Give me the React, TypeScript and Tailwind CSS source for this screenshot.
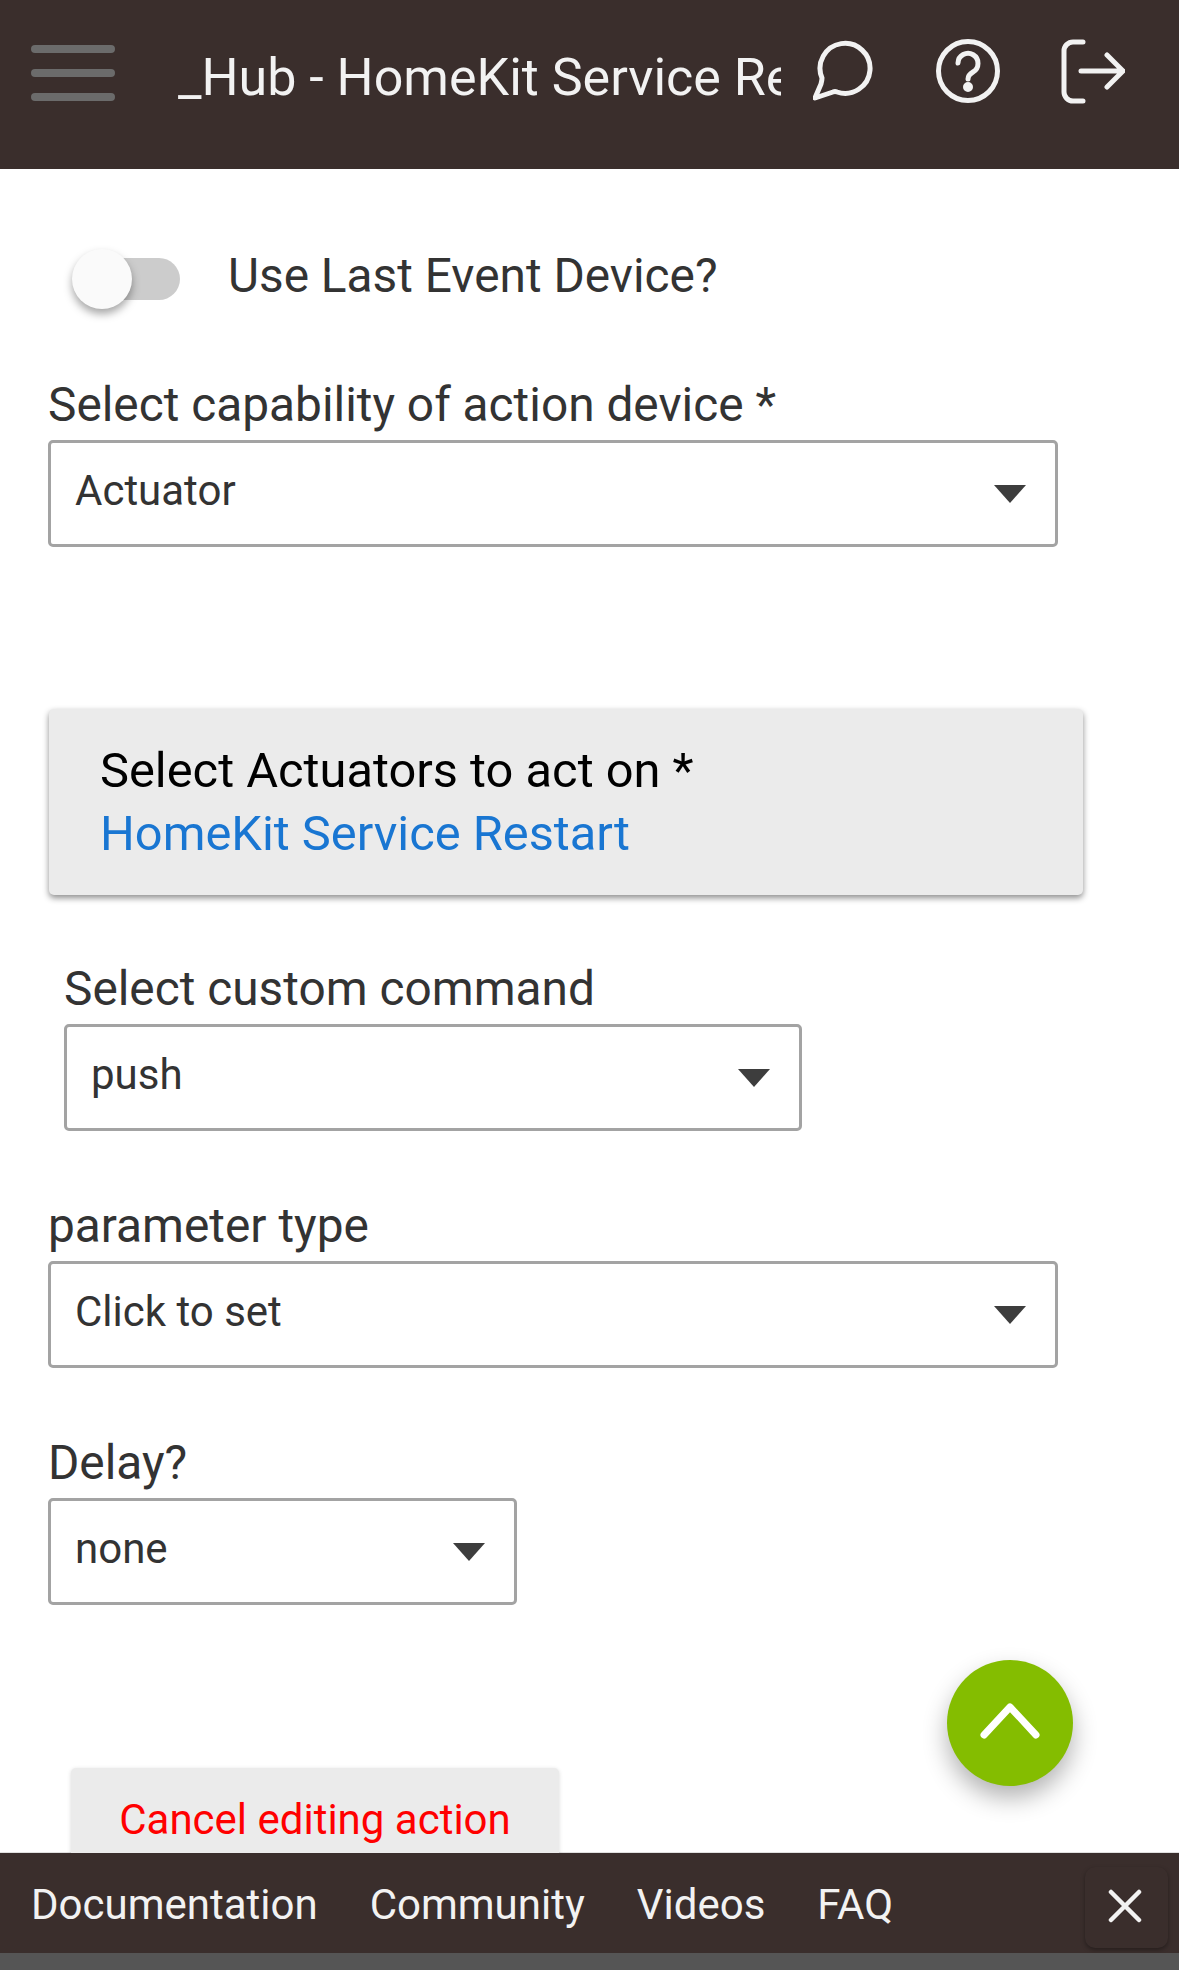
import React from 'react';

const Caret = () => (
  <svg width="34" height="20" viewBox="0 0 34 20" className="shrink-0">
    <path d="M1 1 H33 L17 19 Z" fill="#3d3d3d" />
  </svg>
);

const SelectBox = ({ value, width }: { value: string; width: string }) => (
  <div className={`${width} mt-[5px] h-[107px] box-border border-[3px] border-[#a3a3a3] rounded-[5px] bg-white flex items-center justify-between pl-[24px] pr-[28px]`}>
    <span className="text-[42px] leading-none text-[#333] -mt-[5px]">{value}</span>
    <Caret />
  </div>
);

export default function App() {
  return (
    <div className="w-[1179px] h-[1970px] flex flex-col overflow-hidden bg-white font-['Roboto',sans-serif]">
      {/* top bar */}
      <header className="h-[169px] shrink-0 bg-[#3a2e2c] flex items-start">
        <div className="ml-[31px] mt-[45px] w-[84px] flex flex-col gap-[16px]">
          <div className="h-[8px] rounded-[4px] bg-[#6b6b6b]" />
          <div className="h-[8px] rounded-[4px] bg-[#6b6b6b]" />
          <div className="h-[8px] rounded-[4px] bg-[#6b6b6b]" />
        </div>
        <div className="ml-[63px] mt-[47px] w-[603px] overflow-hidden whitespace-nowrap text-[52px] leading-[62px] text-[#f2f2f2]">
          _Hub - HomeKit Service Restart
        </div>
        <svg width="60" height="62" viewBox="0 0 60 62" fill="none" stroke="#f2f2f2" strokeWidth="5" strokeLinecap="round" strokeLinejoin="round" className="ml-[32px] mt-[40px]">
          <path d="M9 38 Q9 40 8 44 L2 58 L20 52 Q22 51 24 52 A25 25 0 1 0 9 38 Z" />
        </svg>
        <svg width="66" height="66" viewBox="0 0 66 66" fill="none" stroke="#f2f2f2" strokeWidth="5" strokeLinecap="round" strokeLinejoin="round" className="ml-[62px] mt-[38px]">
          <circle cx="33" cy="33" r="29.5" />
          <path d="M23 25 a10 10 0 1 1 15 9 q-5 3 -5 7" />
          <circle cx="33" cy="49" r="2.5" fill="#f2f2f2" />
        </svg>
        <svg width="66" height="66" viewBox="0 0 66 66" fill="none" stroke="#f2f2f2" strokeWidth="5" strokeLinecap="round" strokeLinejoin="round" className="ml-[58px] mt-[38px]">
          <path d="M24 4 H14 a9 9 0 0 0 -9 9 V54 a9 9 0 0 0 9 9 H24" />
          <path d="M22 33 H64 M48 17 L64 33 L48 49" />
        </svg>
      </header>

      {/* form */}
      <main className="relative flex-1 min-h-0 overflow-hidden">
        <div className="flex items-center mt-[80px] ml-[72px]">
          <div className="relative w-[108px] h-[60px] flex items-center justify-end">
            <div className="w-[70px] h-[42px] rounded-r-[21px] bg-[#cccccc]" />
            <div className="absolute left-0 top-0 w-[60px] h-[60px] rounded-full bg-[#fafafa] shadow-[0_5px_9px_rgba(0,0,0,0.35)]" />
          </div>
          <span className="ml-[48px] -mt-[6px] text-[47.8px] leading-[54px] text-[#333]">Use Last Event Device?</span>
        </div>

        <div className="ml-[48px] mt-[66px]">
          <div className="text-[47.8px] leading-[60px] text-[#333]">Select capability of action device *</div>
          <SelectBox value="Actuator" width="w-[1010px]" />
        </div>

        <div className="ml-[49px] mt-[162px] w-[1034px] h-[186px] rounded-[5px] bg-[#ebebeb] shadow-[0_3px_6px_rgba(0,0,0,0.45)] pl-[51px] pt-[30px]">
          <div className="text-[48.8px] leading-[63px] text-black">Select Actuators to act on *</div>
          <div className="text-[48.8px] leading-[63px] text-[#1976d2]">HomeKit Service Restart</div>
        </div>

        <div className="ml-[64px] mt-[64px]">
          <div className="text-[47.8px] leading-[60px] text-[#333]">Select custom command</div>
          <SelectBox value="push" width="w-[738px]" />
        </div>

        <div className="ml-[48px] mt-[65px]">
          <div className="text-[47.8px] leading-[60px] text-[#333]">parameter type</div>
          <SelectBox value="Click to set" width="w-[1010px]" />
        </div>

        <div className="ml-[48px] mt-[65px]">
          <div className="text-[47.8px] leading-[60px] text-[#333]">Delay?</div>
          <SelectBox value="none" width="w-[469px]" />
        </div>

        <div className="ml-[71px] mt-[163px] w-[488px] h-[120px] rounded-[5px] bg-[#ebebeb] shadow-[0_1px_4px_rgba(0,0,0,0.15)] pt-[27px] text-center text-[42px] leading-[50px] text-[#ff0000]">
          Cancel editing action
        </div>

        {/* back to top */}
        <div className="absolute left-[947px] top-[1491px] w-[126px] h-[126px] rounded-full bg-[#84bd00] shadow-[0_12px_24px_rgba(0,0,0,0.3)] flex items-center justify-center">
          <svg width="60" height="36" viewBox="0 0 60 36" fill="none" stroke="#fff" strokeWidth="7" strokeLinecap="round" strokeLinejoin="round" className="-mt-[4px]">
            <path d="M4 32 L30 4 L56 32" />
          </svg>
        </div>
      </main>

      {/* bottom links */}
      <footer className="h-[100px] shrink-0 bg-[#3a2e2c] flex items-center pl-[31px] pr-[11px] border-t border-[#e0e0e0] box-content -mt-px">
        <a className="mt-[3px] text-[42px] leading-none text-[#f2f2f2]">Documentation</a>
        <a className="mt-[3px] ml-[52px] text-[42px] leading-none text-[#f2f2f2]">Community</a>
        <a className="mt-[3px] ml-[52px] text-[42px] leading-none text-[#f2f2f2]">Videos</a>
        <a className="mt-[3px] ml-[52px] text-[42px] leading-none text-[#f2f2f2]">FAQ</a>
        <div className="ml-auto w-[83px] h-[81px] mt-[8px] rounded-[10px] bg-[#3a2e2c] shadow-[0_2px_4px_rgba(0,0,0,0.35)] flex items-center justify-center">
          <svg width="34" height="34" viewBox="0 0 34 34" fill="none" stroke="#f2f2f2" strokeWidth="4.5" strokeLinecap="round" className="-mt-[2px] -ml-[3px]">
            <path d="M3 3 L31 31 M31 3 L3 31" />
          </svg>
        </div>
      </footer>
      <div className="h-[17px] shrink-0 bg-[#555555]" />
    </div>
  );
}
